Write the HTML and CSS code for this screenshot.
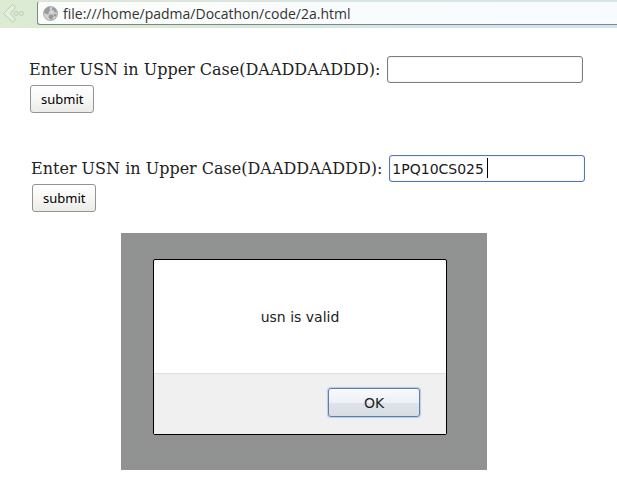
FILE: index.html
```html
<!DOCTYPE html>
<html lang="en">
<head>
<meta charset="utf-8">
<title>USN validation</title>
<link rel="stylesheet" href="styles.css">
</head>
<body>
<header class="toolbar">
  <button class="back" type="button" aria-label="Back">
    <svg width="24" height="20" viewBox="0 0 24 20" fill="none" stroke="#bccbb5" stroke-width="1">
      <path d="M9.500 1.500L0.500 10.500L9.500 19L12 17V15.500L7 10.500L12 5V3.500Z" fill="#e4efdd"/>
      <circle cx="13" cy="10.500" r="2"/>
      <circle cx="18.500" cy="10.500" r="2"/>
    </svg>
  </button>
  <div class="address">
    <svg width="15" height="15" viewBox="0 0 14 14">
      <circle cx="7" cy="7" r="6.500" fill="#d2d4d3" stroke="#b0b2b1"/>
      <path d="M1 6L2 3L5 1L7 1L6 3L7 4L5 6L6 7L4 8L2 7ZM9 1L12 3L13 6L11 6L10 4L8 4ZM6 8L9 8L10 10L8 13L6 12L5 10ZM10 7L13 8L12 10L10 9Z" fill="#989a99"/>
    </svg>
    <input class="url" type="text" aria-label="Address" value="file:///home/padma/Docathon/code/2a.html">
  </div>
</header>
<main>
  <form class="usn-form">
    <div class="row">
      <label for="usn-empty">Enter USN in Upper Case(DAADDAADDD):</label>
      <input class="field" id="usn-empty" type="text">
    </div>
    <button class="submit" type="button">submit</button>
  </form>
  <form class="usn-form second">
    <div class="row">
      <label for="usn-filled">Enter USN in Upper Case(DAADDAADDD):</label>
      <div class="active-field">
        <input class="field focused" id="usn-filled" type="text" value="1PQ10CS025">
        <span class="caret"></span>
      </div>
    </div>
    <button class="submit" type="button">submit</button>
  </form>
  <section class="backdrop">
    <div class="dialog" role="alertdialog" aria-labelledby="message">
      <p class="message" id="message">usn is valid</p>
      <div class="actions"><button class="ok" type="button">OK</button></div>
    </div>
  </section>
</main>
</body>
</html>
```
FILE: styles.css
```css
* { box-sizing: border-box; }
body {
  margin: 0;
  background: #fff;
  color: #222;
  font-family: "DejaVu Serif", serif;
  font-size: 16px;
}
.toolbar {
  display: flex;
  height: 28px;
  padding-top: 1px;
  background: linear-gradient(90deg, #dcebd2, #d9ead7 30%, #cfe6ee 70%, #cfe6ee);
}
.back {
  width: 37px;
  padding: 0 0 0 3px;
  border: 0;
  background: none;
  text-align: left;
}
.address {
  display: flex;
  flex: 1;
  align-items: center;
  gap: 5px;
  height: 24px;
  padding-left: 5px;
  border: 1px solid #858585;
  border-top-color: #dfe3e0;
  border-right: 0;
  border-radius: 3px 0 0 3px;
  background: linear-gradient(90deg, #fbfdfa, #f7fbfe);
}
.url {
  flex: 1;
  min-width: 0;
  padding: 0;
  border: 0;
  background: none;
  color: #333;
  font: 14px "Open Sans", sans-serif;
}
.usn-form { padding: 28px 0 0 29px; }
.second { padding: 42px 0 0 31px; }
.row {
  display: flex;
  align-items: center;
  gap: 7px;
}
label { white-space: nowrap; }
.field {
  display: block;
  width: 196px;
  height: 27px;
  padding: 0 2px;
  border: 1px solid #7d7d79;
  border-radius: 3px;
  box-shadow: inset 0 0 1px #aaa;
  background: #fff;
  color: #1a1a1a;
  font: 14px "DejaVu Sans", sans-serif;
}
.focused {
  border-color: #5079b0;
  box-shadow: inset 0 0 1px #7aa0d0;
}
.active-field { position: relative; }
.caret {
  position: absolute;
  top: 3px;
  left: 98px;
  width: 1px;
  height: 20px;
  background: #000;
}
.submit {
  display: block;
  height: 28px;
  margin: 2px 0 0 1px;
  padding: 0 10px;
  border: 1px solid #939390;
  border-radius: 3px;
  background: linear-gradient(#fff, #f7f7f6 50%, #ebebe8);
  color: #000;
  font: 13px "Noto Sans", sans-serif;
}
.backdrop {
  width: max-content;
  margin: 21px 0 0 121px;
  padding: 26px 40px 35px 32px;
  background: repeating-conic-gradient(#8f9192 0 25%, #929291 0 50%) 0 0 / 4px 4px;
}
.dialog {
  width: 294px;
  border: 1px solid #000;
  border-radius: 2px;
  background: #fff;
}
.message {
  margin: 0;
  padding: 47px 0 46px;
  color: #222;
  font: 14px/20px "DejaVu Sans", sans-serif;
  text-align: center;
}
.actions {
  display: flex;
  justify-content: flex-end;
  padding: 14px 26px 17px;
  border-top: 1px solid #dedede;
  background: #f0f0f0;
}
.ok {
  width: 92px;
  height: 29px;
  padding: 0;
  border: 1px solid #5c7ead;
  border-radius: 3px;
  box-shadow: 0 0 1px 1px #b8cbe5;
  background: linear-gradient(#f8faff, #edf0f6 50%, #dfe3e9 51%, #d9dee5);
  color: #222;
  font: 14px "DejaVu Sans", sans-serif;
}
```
